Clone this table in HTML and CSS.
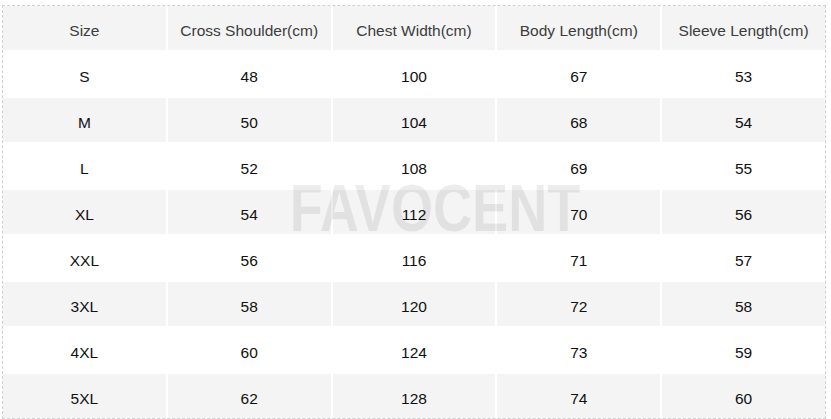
FILE: index.html
```html
<!DOCTYPE html>
<html>
<head>
<meta charset="utf-8">
<link rel="stylesheet" href="styles.css">
</head>
<body>
<div class="wrap">
  <div class="table">
    <div class="cell head">Size</div>
    <div class="cell head">Cross Shoulder(cm)</div>
    <div class="cell head">Chest Width(cm)</div>
    <div class="cell head">Body Length(cm)</div>
    <div class="cell head">Sleeve Length(cm)</div>

    <div class="cell">S</div><div class="cell">48</div><div class="cell">100</div><div class="cell">67</div><div class="cell">53</div>
    <div class="cell alt">M</div><div class="cell alt">50</div><div class="cell alt">104</div><div class="cell alt">68</div><div class="cell alt">54</div>
    <div class="cell">L</div><div class="cell">52</div><div class="cell">108</div><div class="cell">69</div><div class="cell">55</div>
    <div class="cell alt">XL</div><div class="cell alt">54</div><div class="cell alt">112</div><div class="cell alt">70</div><div class="cell alt">56</div>
    <div class="cell">XXL</div><div class="cell">56</div><div class="cell">116</div><div class="cell">71</div><div class="cell">57</div>
    <div class="cell alt">3XL</div><div class="cell alt">58</div><div class="cell alt">120</div><div class="cell alt">72</div><div class="cell alt">58</div>
    <div class="cell">4XL</div><div class="cell">60</div><div class="cell">124</div><div class="cell">73</div><div class="cell">59</div>
    <div class="cell alt">5XL</div><div class="cell alt">62</div><div class="cell alt">128</div><div class="cell alt">74</div><div class="cell alt">60</div>
  </div>
  <div class="watermark">FAVOCENT</div>
</div>
</body>
</html>
```

FILE: styles.css
```css
html, body {
  margin: 0;
  padding: 0;
  background: #ffffff;
}
body {
  font-family: "Liberation Sans", Arial, sans-serif;
  overflow: hidden;
}
.wrap {
  position: relative;
  width: 822px;
  margin: 5px 0 0 2px;
  border: 1px dashed #cfcfcf;
}
.table {
  display: grid;
  grid-template-columns: repeat(5, 1fr);
  grid-auto-rows: 44px;
  gap: 2px;
}
.cell {
  display: flex;
  align-items: center;
  justify-content: center;
  padding-top: 5px;
  box-sizing: border-box;
  font-size: 15.5px;
  color: #111111;
  background: #ffffff;
}
.head {
  background: #f4f4f4;
  color: #3c3c3c;
}
.alt {
  background: #f4f4f4;
}
.watermark {
  position: absolute;
  left: 432px;
  top: 202px;
  transform: translate(-50%, -50%) scaleX(0.82);
  font-size: 66px;
  font-weight: bold;
  line-height: 1;
  color: rgba(0, 0, 0, 0.075);
  pointer-events: none;
  white-space: nowrap;
}
```
